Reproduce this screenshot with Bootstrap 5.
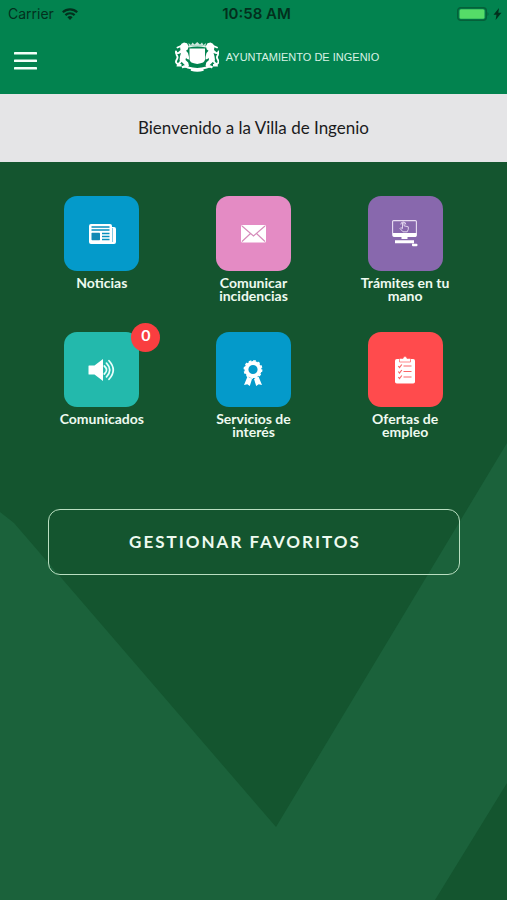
<!DOCTYPE html>
<html lang="es">
<head>
<meta charset="utf-8">
<meta name="viewport" content="width=device-width, initial-scale=1">
<title>Ayuntamiento de Ingenio</title>
<link rel="stylesheet" href="https://cdn.jsdelivr.net/npm/bootstrap@5.3.0/dist/css/bootstrap.min.css">
<style>
  body { font-family: Lato, sans-serif; background: #14552f; }
  svg { display: block; flex-shrink: 0; }
  .app-header { background: #02834f; color: #fff; }
  .status-bar { font: 400 14px/28px Inter, sans-serif; color: #03301d; padding: 0 5px 0 8px; }
  .status-bar .clock { font-size: 15px; font-weight: 600; padding-left: 3px; }
  .app-bar { height: 66px; padding-left: 14px; }
  .menu-btn { width: 33px; height: 44px; }
  .brand { font: 400 11px/16px "Liberation Sans", sans-serif; color: #d9f2e5; gap: 7px; padding-bottom: 8px; }
  .welcome { background: #e5e5e7; color: #1b1b1d; font-size: 17px; line-height: 28px; padding: 20px 16px; }
  .home { isolation: isolate; }
  .backdrop { z-index: -1; }
  .services { padding: 34px 26px 0; row-gap: 30px; }
  .service { color: #eefaf0; font-size: 14px; font-weight: 700; line-height: 13px; }
  .tile { width: 75px; height: 75px; border-radius: 13px; margin-bottom: 5px; }
  .blue { background: #049aca; }
  .pink { background: #e48bc4; }
  .violet { background: #8868ad; }
  .teal { background: #23b9ac; }
  .coral { background: #ff4b4d; }
  .count { top: -9px; right: -21px; width: 29px; height: 29px; background: #f93e40; font-size: 16px; line-height: 24px; }
  .service-label { max-width: 100px; }
  .favourites { margin: 71px 47px 40px 48px; }
  .fav-btn { border: 1px solid #b9dfc1; border-radius: 12px; color: #eefaf0; font-size: 17px; font-weight: 700; line-height: 24px; letter-spacing: 2px; padding: 20px 20px 20px 2px; }
  .fav-btn:hover { border-color: #fff; color: #fff; }
</style>
<script src="https://cdn.jsdelivr.net/npm/bootstrap@5.3.0/dist/js/bootstrap.bundle.min.js" defer></script>
</head>
<body class="d-flex flex-column min-vh-100">
<header class="app-header">
  <div class="status-bar row g-0 align-items-center">
    <div class="col d-flex align-items-center gap-2">
      <span>Carrier</span>
      <svg width="16" height="12" viewBox="0 0 16 12" fill="none" stroke="#03301d" stroke-width="2.2" role="img" aria-label="Wi-Fi"><path d="M.8 4.3a10.3 10.3 0 0 1 14.4 0M3.4 7.1a6.6 6.6 0 0 1 9.2 0"/><path d="M8 12 5.4 9.3a3.8 3.8 0 0 1 5.2 0z" fill="#03301d" stroke="none"/></svg>
    </div>
    <div class="col-auto clock">10:58 AM</div>
    <div class="col d-flex align-items-center justify-content-end gap-1">
      <svg width="32" height="14" viewBox="0 0 32 14" role="img" aria-label="Batería"><rect x=".7" y=".7" width="28.600" height="12.600" rx="3" fill="none" stroke="#056039" stroke-width="1.400"/><rect x="2.500" y="2.200" width="25" height="9.600" rx="1.500" fill="#55dc68"/><path d="M30.500 5v4q2-2 0-4z" fill="#056039"/></svg>
      <svg width="9" height="12" viewBox="0 0 9 12" fill="#03301d" aria-hidden="true"><path d="M6 0 .5 6.800h3L2.600 12l5.900-7.200H5.300z"/></svg>
    </div>
  </div>
  <nav class="app-bar d-flex align-items-center">
    <button class="menu-btn btn p-0 border-0" type="button" aria-label="Menú">
      <svg width="23" height="18" viewBox="0 0 23 18" fill="#f2fff8"><rect y="0" width="23" height="2.500" rx=".6"/><rect y="7.500" width="23" height="2.500" rx=".6"/><rect y="15" width="23" height="2.500" rx=".6"/></svg>
    </button>
    <a class="brand d-flex flex-fill align-items-center justify-content-center text-decoration-none" href="#">
      <svg width="44" height="30" viewBox="0 0 44 30" fill="#fff" aria-hidden="true">
        <path d="M14.500 6.500h15.500v11q0 3.500-7.750 4.500-7.750-1-7.750-4.500z"/>
        <path d="M13.500 4.800q8.750-2 17.500 0" fill="none" stroke="#e4f5ed" stroke-width="1.200"/>
        <path d="m14 4-.5-3 2.500 2 1.500-2.500L19.500 2.500 22.200 0 25 2.500l2-2L28.500 3 31 1l-.5 3q-8.300-1.500-16.500 0z" opacity=".8"/>
        <g id="lion">
          <path d="M6.500 1.800 9 .5l3 .8 1.700 3-1 3.200-1.700 1.300 2 2.200 1 4v2.500l-2-.5-1-1.300-.5 2.300 2.700 2.500.8 3.500-2.500 1.800-4-.3.500-1.700 2-.5-3-3-2.500-2 .5-4 1-3.300-2.500 1-3-.3-.5-1.700 3 .2L5.500 8 5 4.500z"/>
          <path d="M6 19q-1.500 3-3 3-3-1-1.500-4 2-2.500.2-5L1 9.500M6 4 2.500 5.500" fill="none" stroke="#fff" stroke-width="1.900" stroke-linecap="round"/>
          <path d="M2 22h4.500v2.500H1.500z"/>
        </g>
        <use href="#lion" transform="matrix(-1 0 0 1 44.500 0)"/>
        <path d="M7 25.500q3-2 6 0 9.200 3 18.500 0 3-2 6 0M16 27.700q6.200 1.800 12.500 0" fill="none" stroke="#fff" stroke-width="2.200"/>
      </svg>
      <span>AYUNTAMIENTO DE INGENIO</span>
    </a>
  </nav>
</header>
<h1 class="welcome text-center fw-normal m-0">Bienvenido a la Villa de Ingenio</h1>
<main class="home position-relative flex-fill">
  <svg class="backdrop position-absolute top-0 start-0 w-100 h-100" viewBox="0 0 507 738" preserveAspectRatio="none" fill="#1b623b" aria-hidden="true"><path d="M0 350 14 361 276 665 507 281V621L435 738H0z"/></svg>
  <div class="services row g-0 text-center">
    <div class="col-4">
      <a class="service d-flex flex-column align-items-center text-decoration-none" href="#">
        <span class="tile blue d-flex align-items-center justify-content-center">
          <svg width="28" height="22" viewBox="0 0 28 22"><path d="M3 1h19q2 0 2 2v1h2q2 0 2 2v13q0 2-2 2H3q-2 0-2-2V3q0-2 2-2z" fill="#fff"/><path d="M24.500 5v14" stroke="#65bddc" stroke-width=".8"/><path d="M3.500 4h18M3.500 7h18M14 10.500h7.500M14 13.500h7.500M14 16.500h7.500" stroke="#078fbc" stroke-width="1.300"/><rect x="3.500" y="9.700" width="8.500" height="7.500" rx=".7" fill="#1489b4"/></svg>
        </span>
        <span class="service-label">Noticias</span>
      </a>
    </div>
    <div class="col-4">
      <a class="service d-flex flex-column align-items-center text-decoration-none" href="#">
        <span class="tile pink d-flex align-items-center justify-content-center">
          <svg width="25" height="18" viewBox="0 0 25 18"><rect width="25" height="17.500" rx="1.500" fill="#fff"/><path d="m1 1 11.500 10L24 1M1 16.500l8.500-8M24 16.500l-8.500-8" fill="none" stroke="#d58ab9" stroke-width="1.100"/></svg>
        </span>
        <span class="service-label">Comunicar incidencias</span>
      </a>
    </div>
    <div class="col-4">
      <a class="service d-flex flex-column align-items-center text-decoration-none" href="#">
        <span class="tile violet d-flex align-items-center justify-content-center">
          <svg width="26" height="27" viewBox="0 0 26 27"><rect x=".6" y=".6" width="23.800" height="15.500" rx="1" fill="none" stroke="#e9def3" stroke-width="1.100"/><path d="M1 13h23.500v2.500q0 1.500-1.500 1.500H2.500Q1 17 1 15.500zM9.500 17h6v2h-6zM3 20.300h19v3H3zM20 23.800h4.500q1 0 1 1.200t-1 1.200H21q-1 0-1-1z" fill="#fff"/><path d="M10.500 3v5.500l-1.700-.8-.8.800 3 3.300h4.200l1.100-2.500v-2.500l-4.300-1V3q-.8-.8-1.500 0zM8.800 4.500q0-2.500 2.500-2.500t2.500 2.500" fill="none" stroke="#e9def3" stroke-width=".9"/></svg>
        </span>
        <span class="service-label">Trámites en tu mano</span>
      </a>
    </div>
    <div class="col-4">
      <a class="service d-flex flex-column align-items-center text-decoration-none" href="#">
        <span class="tile teal d-flex align-items-center justify-content-center position-relative">
          <svg width="27" height="24" viewBox="0 0 27 24"><path d="M1 7.500h5.500L15 1v22l-8.500-6.500H1q-.5 0-.5-.5V8q0-.5.500-.5z" fill="#fff"/><path d="M16.300 8q4.500 4 0 8M18.500 5.200q6.500 6.800 0 13.600M21 2.700q8.500 9.300 0 18.600" fill="none" stroke="#e9fffb" stroke-width="1.700" stroke-linecap="round"/></svg>
          <span class="count position-absolute rounded-circle text-white">0</span>
        </span>
        <span class="service-label">Comunicados</span>
      </a>
    </div>
    <div class="col-4">
      <a class="service d-flex flex-column align-items-center text-decoration-none" href="#">
        <span class="tile blue d-flex align-items-center justify-content-center pt-2">
          <svg width="20" height="27" viewBox="0 0 20 27"><path d="M4.500 16.500 9 19 6.800 26l-2.500-1.800L1 25zM15.500 16.500 11 19l2.200 7 2.500-1.800L19 25z" fill="#fff"/><circle cx="10" cy="9.500" r="6.600" fill="none" stroke="#fff" stroke-width="4"/><circle cx="10" cy="9.500" r="8.700" fill="none" stroke="#fff" stroke-width="1.500" stroke-dasharray="2.600 1.955"/></svg>
        </span>
        <span class="service-label">Servicios de interés</span>
      </a>
    </div>
    <div class="col-4">
      <a class="service d-flex flex-column align-items-center text-decoration-none" href="#">
        <span class="tile coral d-flex align-items-center justify-content-center">
          <svg width="20" height="28" viewBox="0 0 20 28"><rect y="3" width="20" height="24.500" rx="1.800" fill="#fff"/><path d="M4.500 6V3.500q0-1 1-1H8q.3-2 2-2t2 2h2.500q1 0 1 1V6z" fill="#fff" stroke="#ff6b6c" stroke-width=".8"/><path d="M8.500 10h8M8.500 15.500h8M8.500 21h8M3.300 10l1.200 1.500L6.800 8.500M3.300 15.500 4.500 17l2.300-3M3.300 21l1.200 1.500 2.300-3" fill="none" stroke="#f96768" stroke-width="1.200"/></svg>
        </span>
        <span class="service-label">Ofertas de empleo</span>
      </a>
    </div>
  </div>
  <div class="favourites">
    <button class="fav-btn btn w-100" type="button">GESTIONAR FAVORITOS</button>
  </div>
</main>
</body>
</html>
